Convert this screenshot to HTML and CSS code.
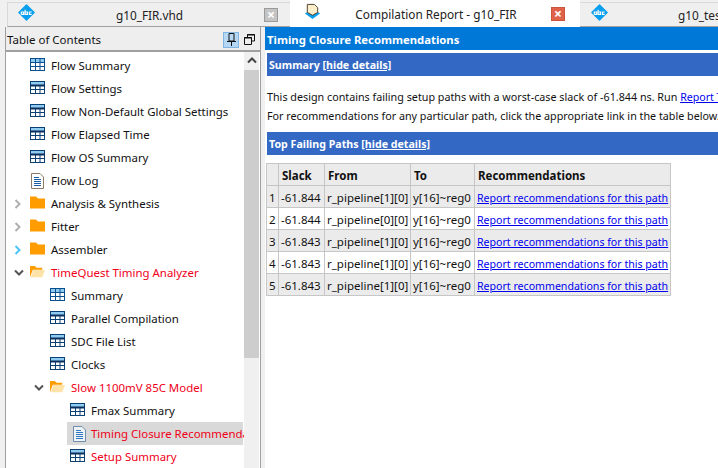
FILE: index.html
```html
<!DOCTYPE html>
<html lang="en">
<head>
    <meta charset="UTF-8">
    <title>Compilation Report - g10_FIR</title>
    <link rel="stylesheet" href="styles.css">
</head>
<body>
    <svg class="icon-defs" width="0" height="0">
        <symbol id="i-abc" viewBox="0 0 18 18">
            <path d="M9 1 L17 9 L9 17 L1 9 Z" fill="#0a9fee" stroke="#0a9fee" stroke-width="1.5" stroke-linejoin="round"/>
            <path d="M3.5 11 V8.5 H6 V11 H3.5 M7.5 6 V11 H10 V8.5 H7.5 M14.5 8.5 H12 V11 H14.5" fill="none" stroke="#fff" stroke-width="1.2"/>
        </symbol>
        <symbol id="i-report" viewBox="0 0 18 18">
            <path d="M9 6 L17 11 L9 17 L1 11 Z" fill="#0a9fee"/>
            <path d="M3.5 1.5 H11 L14.5 5 V10 L9 13 L3.5 10 Z" fill="#fbeecb" stroke="#4a3b28"/>
        </symbol>
        <symbol id="i-grid" viewBox="0 0 15 13">
            <rect x="0.5" y="0.5" width="14" height="12" fill="#fff" stroke="#0a4f8f"/>
            <rect x="1" y="1" width="13" height="3" fill="#8fcbf0"/>
            <path d="M0 4.5 H15 M0 8.5 H15 M5.5 1 V12 M10 1 V12" stroke="#0a4f8f" fill="none"/>
        </symbol>
        <symbol id="i-table" viewBox="0 0 15 13">
            <rect x="0.5" y="0.5" width="14" height="12" fill="#fff" stroke="#0a4175"/>
            <rect x="1" y="1" width="13" height="3" fill="#8fcbf0"/>
            <path d="M0 4.5 H15" stroke="#0a2f5c" stroke-width="2" fill="none"/>
            <path d="M0 8.5 H15 M5.5 5 V12 M10 5 V12" stroke="#0a4175" fill="none"/>
        </symbol>
        <symbol id="i-log" viewBox="0 0 13 16">
            <path d="M0.5 0.5 H9 L12.5 4 V15.5 H0.5 Z" fill="#fff" stroke="#8c7b68"/>
            <path d="M3 4.5 H8 M3 6.5 H10 M3 8.5 H10 M3 10.5 H10 M3 12.5 H10" stroke="#1c5fa8" fill="none"/>
        </symbol>
        <symbol id="i-log-open" viewBox="0 0 13 16">
            <path d="M0.5 0.5 H9 L12.5 4 V15.5 H0.5 Z" fill="#eef3f8" stroke="#6f8dab"/>
            <path d="M3 4.5 H8 M3 6.5 H10 M3 8.5 H10 M3 10.5 H10 M3 12.5 H10" stroke="#2f78c0" fill="none"/>
        </symbol>
        <symbol id="i-folder" viewBox="0 0 15 12">
            <path d="M0 0 H6 L8 2 H15 V12 H0 Z" fill="#ff9c00"/>
        </symbol>
        <symbol id="i-folder-open" viewBox="0 0 16 12">
            <path d="M0 12 V0 H5 L7 2 H13 V4 H3 Z" fill="#ff9c00"/>
            <path d="M3.5 4.5 H16 L13 12 H1 Z" fill="#fde3a7"/>
        </symbol>
        <symbol id="i-right" viewBox="0 0 8 10">
            <path d="M1.5 1 L5.5 5 L1.5 9" fill="none" stroke="currentColor" stroke-width="2"/>
        </symbol>
        <symbol id="i-down" viewBox="0 0 10 8">
            <path d="M1 1.5 L5 5.5 L9 1.5" fill="none" stroke="currentColor" stroke-width="2"/>
        </symbol>
    </svg>

    <div class="tab-bar">
        <div class="tab tab-first">
            <svg class="tab-icon"><use href="#i-abc"/></svg>
            <span class="tab-name">g10_FIR.vhd</span>
            <span class="tab-close">×</span>
        </div>
        <div class="tab tab-active">
            <svg class="tab-icon"><use href="#i-report"/></svg>
            <span class="tab-name">Compilation Report - g10_FIR</span>
            <span class="tab-close tab-close-red">×</span>
        </div>
        <div class="tab tab-last">
            <svg class="tab-icon"><use href="#i-abc"/></svg>
            <span class="tab-name">g10_test</span>
        </div>
    </div>

    <div class="workspace">
        <div class="toc-panel">
            <div class="toc-head">
                <span class="toc-title">Table of Contents</span>
                <span class="pin-button">
                    <svg width="11" height="15" viewBox="0 0 11 15"><path d="M3 1.5 H8 V9 H3 Z M1 9.5 H10 M5.5 10 V14" fill="none" stroke="#111"/></svg>
                </span>
                <svg class="float-button" width="11" height="11" viewBox="0 0 11 11"><path d="M3.5 3 V0.5 H10.5 V7 H8 M0.5 3.5 H7.5 V10.5 H0.5 Z" fill="none" stroke="#111"/><path d="M0 4 H8 M3 1 H11" stroke="#111"/></svg>
            </div>
            <div class="toc-body">
                <ul class="tree">
                    <li class="tree-row"><span class="arrow"></span><svg class="ico"><use href="#i-grid"/></svg><span>Flow Summary</span></li>
                    <li class="tree-row"><span class="arrow"></span><svg class="ico"><use href="#i-table"/></svg><span>Flow Settings</span></li>
                    <li class="tree-row"><span class="arrow"></span><svg class="ico"><use href="#i-table"/></svg><span>Flow Non-Default Global Settings</span></li>
                    <li class="tree-row"><span class="arrow"></span><svg class="ico"><use href="#i-table"/></svg><span>Flow Elapsed Time</span></li>
                    <li class="tree-row"><span class="arrow"></span><svg class="ico"><use href="#i-table"/></svg><span>Flow OS Summary</span></li>
                    <li class="tree-row"><span class="arrow"></span><svg class="ico ico-log"><use href="#i-log"/></svg><span>Flow Log</span></li>
                    <li class="tree-row"><span class="arrow grey"><svg width="8" height="10"><use href="#i-right"/></svg></span><svg class="ico"><use href="#i-folder"/></svg><span>Analysis &amp; Synthesis</span></li>
                    <li class="tree-row"><span class="arrow grey"><svg width="8" height="10"><use href="#i-right"/></svg></span><svg class="ico"><use href="#i-folder"/></svg><span>Fitter</span></li>
                    <li class="tree-row"><span class="arrow cyan"><svg width="8" height="10"><use href="#i-right"/></svg></span><svg class="ico"><use href="#i-folder"/></svg><span>Assembler</span></li>
                    <li class="tree-row red"><span class="arrow dark"><svg width="10" height="8"><use href="#i-down"/></svg></span><svg class="ico"><use href="#i-folder-open"/></svg><span>TimeQuest Timing Analyzer</span></li>
                    <li class="tree-row level-1"><span class="arrow"></span><svg class="ico"><use href="#i-grid"/></svg><span>Summary</span></li>
                    <li class="tree-row level-1"><span class="arrow"></span><svg class="ico"><use href="#i-table"/></svg><span>Parallel Compilation</span></li>
                    <li class="tree-row level-1"><span class="arrow"></span><svg class="ico"><use href="#i-table"/></svg><span>SDC File List</span></li>
                    <li class="tree-row level-1"><span class="arrow"></span><svg class="ico"><use href="#i-table"/></svg><span>Clocks</span></li>
                    <li class="tree-row level-1 red"><span class="arrow dark"><svg width="10" height="8"><use href="#i-down"/></svg></span><svg class="ico"><use href="#i-folder-open"/></svg><span>Slow 1100mV 85C Model</span></li>
                    <li class="tree-row level-2"><span class="arrow"></span><svg class="ico"><use href="#i-table"/></svg><span>Fmax Summary</span></li>
                    <li class="tree-row level-2 red selected"><span class="arrow"></span><svg class="ico ico-log"><use href="#i-log-open"/></svg><span>Timing Closure Recommendations</span></li>
                    <li class="tree-row level-2 red"><span class="arrow"></span><svg class="ico"><use href="#i-table"/></svg><span>Setup Summary</span></li>
                </ul>
                <div class="scrollbar">
                    <div class="scroll-up"><svg width="10" height="8" viewBox="0 0 10 8"><path d="M1 5.5 L5 1.5 L9 5.5" fill="none" stroke="#444" stroke-width="2"/></svg></div>
                    <div class="scroll-thumb"></div>
                </div>
            </div>
        </div>

        <div class="report">
            <div class="report-title">Timing Closure Recommendations</div>
            <div class="section-bar">Summary <a class="bar-link">[hide details]</a></div>
            <div class="summary-text">
                <p>This design contains failing setup paths with a worst-case slack of -61.844 ns. Run <a class="link">Report Timing</a> to generate more details.</p>
                <p>For recommendations for any particular path, click the appropriate link in the table below.</p>
            </div>
            <div class="section-bar">Top Failing Paths <a class="bar-link">[hide details]</a></div>
            <table class="paths">
                <thead>
                    <tr><th class="num"></th><th class="slack">Slack</th><th class="from">From</th><th class="to">To</th><th class="rec">Recommendations</th></tr>
                </thead>
                <tbody>
                    <tr><td class="num">1</td><td>-61.844</td><td>r_pipeline[1][0]</td><td>y[16]~reg0</td><td><a class="link">Report recommendations for this path</a></td></tr>
                    <tr><td class="num">2</td><td>-61.844</td><td>r_pipeline[0][0]</td><td>y[16]~reg0</td><td><a class="link">Report recommendations for this path</a></td></tr>
                    <tr><td class="num">3</td><td>-61.843</td><td>r_pipeline[1][0]</td><td>y[16]~reg0</td><td><a class="link">Report recommendations for this path</a></td></tr>
                    <tr><td class="num">4</td><td>-61.843</td><td>r_pipeline[1][0]</td><td>y[16]~reg0</td><td><a class="link">Report recommendations for this path</a></td></tr>
                    <tr><td class="num">5</td><td>-61.843</td><td>r_pipeline[1][0]</td><td>y[16]~reg0</td><td><a class="link">Report recommendations for this path</a></td></tr>
                </tbody>
            </table>
        </div>
    </div>
</body>
</html>
```

FILE: styles.css
```css
* {
    box-sizing: border-box;
}
html, body {
    margin: 0;
    padding: 0;
    height: 100%;
    overflow: hidden;
}
body {
    font-family: "Noto Sans", Arial, sans-serif;
    font-size: 12px;
    color: #111;
    background-color: #f0f0f0;
    display: flex;
    flex-direction: column;
}
.icon-defs {
    position: absolute;
}

/* tabs */
.tab-bar {
    display: flex;
    height: 27px;
    flex: none;
    padding-left: 7px;
    background-color: #f0f0f0;
    overflow: hidden;
}
.tab {
    display: flex;
    flex: none;
    align-items: center;
    height: 25px;
    margin-top: 2px;
    padding-left: 10px;
    background-color: #efefef;
    border-top: 1px solid #d9d9d9;
    border-bottom: 1px solid #a0a0a0;
    font-size: 11.8px;
    color: #222;
}
.tab-first {
    width: 283px;
    border-left: 1px solid #d9d9d9;
}
.tab-active {
    width: 290px;
    height: 27px;
    margin-top: 0;
    padding-left: 14px;
    background-color: #fff;
    border-top: none;
    border-bottom: none;
}
.tab-last {
    width: 138px;
    padding-left: 11px;
}
.tab-icon {
    width: 17px;
    height: 17px;
    flex: none;
    margin-bottom: 4px;
}
.tab-name {
    flex: 1;
    padding: 0 2px;
    text-align: center;
    white-space: nowrap;
}
.tab-last .tab-name {
    text-align: left;
    padding-left: 70px;
}
.tab-close {
    width: 14px;
    height: 14px;
    flex: none;
    margin-right: 12px;
    background-color: #c4c4c4;
    border: 1px solid #9a9a9a;
    color: #fff;
    font-weight: bold;
    font-size: 14px;
    line-height: 11px;
    text-align: center;
}
.tab-close-red {
    margin-right: 15px;
    background-color: #e0624a;
    border-color: #c9553f;
}

/* layout under the tabs */
.workspace {
    flex: 1;
    display: flex;
    min-height: 0;
    padding-left: 5px;
}
.toc-panel {
    width: 256px;
    flex: none;
    display: flex;
    flex-direction: column;
    border-left: 1px solid #a0a0a0;
    border-right: 1px solid #a0a0a0;
    background-color: #fff;
}
.toc-head {
    height: 25px;
    flex: none;
    display: flex;
    align-items: center;
    padding: 2px 5px 0 1px;
    background-color: #eeeeee;
    border-bottom: 2px solid #a0a0a0;
    font-size: 11.5px;
}
.toc-title {
    flex: 1;
}
.pin-button {
    width: 16px;
    height: 16px;
    display: flex;
    align-items: center;
    justify-content: center;
    background-color: #b5d7f3;
    border: 1px solid #7fb4e3;
    margin-right: 5px;
}
.toc-body {
    flex: 1;
    display: flex;
    min-height: 0;
}
.tree {
    list-style: none;
    margin: 0;
    padding: 2px 1px 0 0;
    width: 238px;
    overflow: hidden;
}
.tree-row {
    display: flex;
    align-items: center;
    height: 23px;
    padding-left: 4px;
    white-space: nowrap;
    font-size: 11.45px;
}
.level-1 {
    padding-left: 24px;
}
.level-2 {
    padding-left: 43px;
}
.selected {
    background-color: #d9d9d9;
    margin-left: 61px;
    padding-left: 1px;
}
.red {
    color: #f00018;
}
.arrow {
    width: 20px;
    flex: none;
    display: flex;
    align-items: center;
    justify-content: flex-start;
    padding-left: 4px;
}
.level-2 .arrow {
    width: 21px;
}
.selected .arrow {
    display: none;
}
.selected .ico-log {
    margin-left: 4px;
    margin-right: 4px;
}
.grey {
    color: #b0b0b0;
}
.cyan {
    color: #4cc4f4;
}
.dark {
    color: #555;
}
.ico {
    width: 15px;
    height: 13px;
    flex: none;
    margin-right: 6px;
    margin-bottom: 2px;
}
.ico-log {
    height: 16px;
    margin-bottom: 0;
}
.scrollbar {
    width: 15px;
    flex: none;
    background-color: #f0f0f0;
}
.scroll-up {
    height: 18px;
    display: flex;
    align-items: center;
    justify-content: center;
}
.scroll-thumb {
    height: 288px;
    background-color: #cdcdcd;
}

/* report */
.report {
    flex: 1;
    min-width: 0;
    margin-left: 4px;
    background-color: #fff;
    overflow: hidden;
}
.report-title {
    height: 23px;
    line-height: 21px;
    padding: 2px 0 0 2px;
    background-color: #0078d7;
    color: #fff;
    font-weight: bold;
    font-size: 11.3px;
    white-space: nowrap;
}
.section-bar {
    height: 23px;
    line-height: 21px;
    margin: 3px 0 0 2px;
    padding: 2px 0 0 2px;
    background-color: #3369c4;
    color: #fff;
    font-weight: bold;
    font-size: 10.65px;
    white-space: nowrap;
}
.bar-link {
    text-decoration: underline;
}
.summary-text {
    height: 53px;
    padding: 13px 0 0 2px;
    white-space: nowrap;
    font-size: 10.75px;
}
.summary-text p {
    margin: 0 0 3px;
    line-height: 16px;
}
.link {
    color: #0000ee;
    text-decoration: underline;
    font-size: 10.6px;
}
.paths {
    border-collapse: collapse;
    margin: 8px 0 0 1px;
    width: 404px;
    table-layout: fixed;
    font-size: 11.5px;
}
.paths th, .paths td {
    height: 22px;
    padding: 2px 2px 0;
    border: 1px solid #c6c6c6;
    text-align: left;
    white-space: nowrap;
    overflow: hidden;
}
.paths th {
    background-color: #ebebeb;
    padding-left: 3px;
}
.paths tbody tr:nth-child(odd) td {
    background-color: #ebebeb;
}
.num {
    width: 12px;
}
.paths .slack {
    width: 46px;
}
.paths .from {
    width: 86px;
}
.paths .to {
    width: 64px;
}
.paths .rec {
    width: 196px;
}
```
